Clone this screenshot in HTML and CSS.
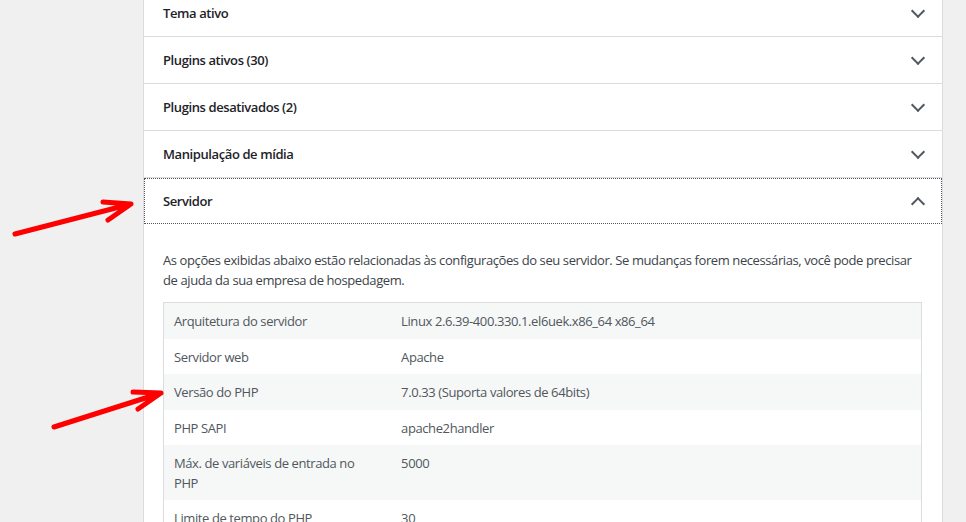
FILE: index.html
```html
<!DOCTYPE html>
<html lang="pt-BR">
<head>
    <meta charset="UTF-8">
    <meta name="viewport" content="width=device-width, initial-scale=1.0">
    <title>Saúde do site - Informações</title>
    <link rel="stylesheet" href="styles.css">
</head>
<body>
<div class="healthWrap">
    <div class="accordion">
        <h3 class="accordionHeading">
            <button class="accordionTrigger" type="button">
                <span class="title">Tema ativo</span>
                <span class="icon"></span>
            </button>
        </h3>
        <h3 class="accordionHeading">
            <button class="accordionTrigger" type="button">
                <span class="title">Plugins ativos (30)</span>
                <span class="icon"></span>
            </button>
        </h3>
        <h3 class="accordionHeading">
            <button class="accordionTrigger" type="button">
                <span class="title">Plugins desativados (2)</span>
                <span class="icon"></span>
            </button>
        </h3>
        <h3 class="accordionHeading">
            <button class="accordionTrigger" type="button">
                <span class="title">Manipulação de mídia</span>
                <span class="icon"></span>
            </button>
        </h3>
        <h3 class="accordionHeading">
            <button class="accordionTrigger open focused" type="button">
                <span class="title">Servidor</span>
                <span class="icon"></span>
            </button>
        </h3>
        <div class="accordionPanel">
            <p>As opções exibidas abaixo estão relacionadas às configurações do seu servidor. Se mudanças forem necessárias, você pode precisar de ajuda da sua empresa de hospedagem.</p>
            <table class="infoTable">
                <tbody>
                <tr><td>Arquitetura do servidor</td><td>Linux 2.6.39-400.330.1.el6uek.x86_64 x86_64</td></tr>
                <tr><td>Servidor web</td><td>Apache</td></tr>
                <tr><td>Versão do PHP</td><td>7.0.33 (Suporta valores de 64bits)</td></tr>
                <tr><td>PHP SAPI</td><td>apache2handler</td></tr>
                <tr><td>Máx. de variáveis de entrada no PHP</td><td>5000</td></tr>
                <tr><td>Limite de tempo do PHP</td><td>30</td></tr>
                <tr><td>Limite de memória do PHP</td><td>256M</td></tr>
                </tbody>
            </table>
        </div>
    </div>
</div>

<!-- red arrows drawn over the screenshot -->
<svg class="markup" width="966" height="522" viewBox="0 0 966 522">
    <g fill="none" stroke="#ff0000" stroke-width="5" stroke-linecap="round" stroke-linejoin="round">
        <path d="M15 234 L131 204 M103 202 L131 204 L108 220"/>
        <path d="M54 427 L161 393 M133 392 L161 393 L138 409"/>
    </g>
</svg>
</body>
</html>
```

FILE: styles.css
```css
body {
    margin: 0;
    background: #f0f0f1;
    color: #3c434a;
    font-family: "Open Sans", "Liberation Sans", sans-serif;
    font-size: 13px;
    line-height: 1.5;
    letter-spacing: -0.4px;
    overflow: hidden;
}

.healthWrap {
    margin-left: 143px;
    width: 800px;
}

/*Accordion*/
.accordion {
    margin-top: -10px;
    background: #fff;
    border-left: 1px solid #dcdcde;
    border-right: 1px solid #dcdcde;
}

.accordionHeading {
    margin: 0;
    border-bottom: 1px solid #dcdcde;
    font-size: inherit;
    font-weight: 600;
}

.accordionHeading:last-of-type {
    border-bottom: 0;
}

.accordionTrigger {
    display: flex;
    align-items: center;
    justify-content: space-between;
    width: 100%;
    height: 46px;
    padding: 2px 19px 0 19px;
    border: 0;
    background: #fff;
    color: #1d2327;
    font: inherit;
    letter-spacing: inherit;
    text-align: left;
    cursor: pointer;
}

.accordionTrigger.focused {
    outline: 1px dotted #50575e;
    outline-offset: -1px;
}

.accordionTrigger .icon {
    width: 8px;
    height: 8px;
    margin-right: 0;
    border: solid #50575e;
    border-width: 0 2px 2px 0;
    transform: translateY(-3px) rotate(45deg);
}

.accordionTrigger.open .icon {
    transform: translateY(2px) rotate(-135deg);
}

/*Panel*/
.accordionPanel {
    padding: 14px 20px 40px 19px;
}

.accordionPanel p {
    margin: 13px 0 12px;
}

.infoTable {
    width: 100%;
    border: 1px solid #dcdcde;
    border-spacing: 0;
    color: #50575e;
}

.infoTable td {
    padding: 9px 10px 7px;
    vertical-align: top;
}

.infoTable td:first-child {
    width: 30%;
}

.infoTable tr:nth-child(odd) {
    background: #f6f7f7;
}

/* annotation layer on top of the page */
.markup {
    position: absolute;
    left: 0;
    top: 0;
    pointer-events: none;
}
```
